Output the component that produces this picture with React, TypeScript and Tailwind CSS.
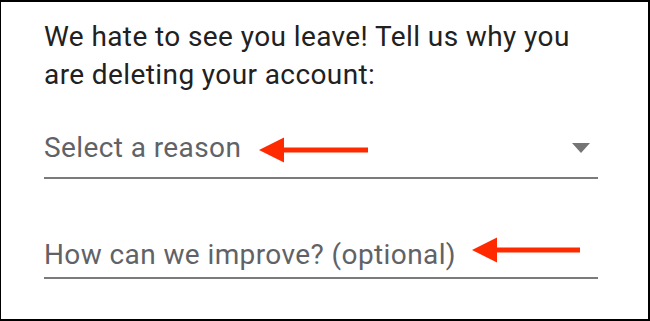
const ArrowLeft = ({ className, length }: { className: string; length: number }) => (
  <svg
    className={className}
    width={length}
    height={26}
    viewBox={`0 0 ${length} 26`}
    fill="#ff2a00"
  >
    <polygon points="0,13 25,0.5 25,25.5" />
    <rect x={24} y={10.5} width={length - 24} height={5} />
  </svg>
);

export default function App() {
  return (
    <div
      className="relative w-[650px] h-[321px] bg-white border-t-2 border-r-2 border-b-2 border-l border-black"
      style={{ fontFamily: 'Roboto, "Noto Sans", sans-serif' }}
    >
      <div className="pl-[43px] pr-[50px] pt-[16px]">
        <p className="text-[28px] leading-[38px] text-[#212121] tracking-[0.4px]">
          We hate to see you leave! Tell us why you
          <br />
          are deleting your account:
        </p>

        {/* reason select */}
        <div className="mt-[35px] flex items-center justify-between border-b-2 border-[#7b7b7b] pb-[10px]">
          <span className="text-[28px] leading-[38px] text-[#5f6368] tracking-[0.4px]">Select a reason</span>
          <svg width="18" height="10" viewBox="0 0 18 10" className="mr-[8px]" fill="#757575">
            <polygon points="0,0 18,0 9,10" />
          </svg>
        </div>

        {/* improve textarea */}
        <div className="mt-[57px] border-b-2 border-[#7b7b7b] pb-[3px]">
          <span className="text-[28px] leading-[38px] text-[#5f6368] tracking-[0.4px]">How can we improve? (optional)</span>
        </div>
      </div>

      {/* annotation arrows */}
      <ArrowLeft className="absolute left-[258px] top-[135px]" length={109} />
      <ArrowLeft className="absolute left-[471px] top-[235px]" length={108} />
    </div>
  );
}
